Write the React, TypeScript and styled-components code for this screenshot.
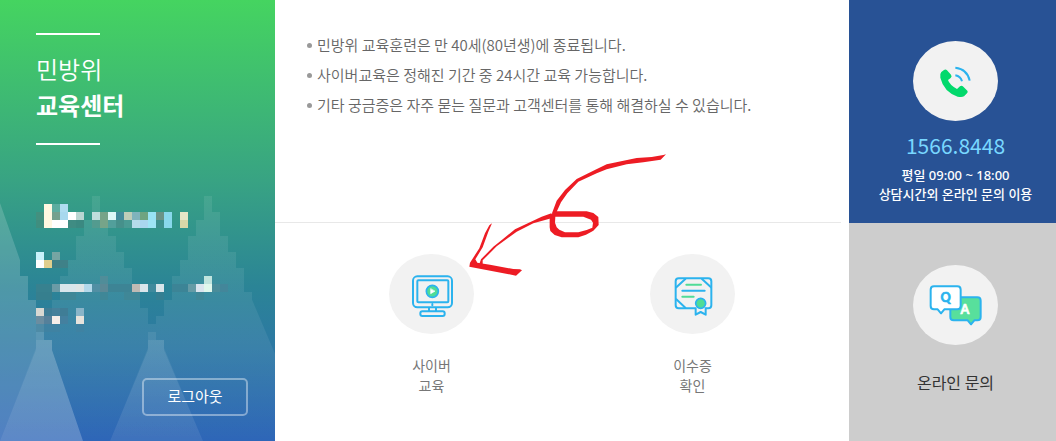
import React from "react";
import styled, { createGlobalStyle } from "styled-components";

const GlobalStyle = createGlobalStyle`
  *, *::before, *::after { box-sizing: border-box; }
  body { margin: 0; background: #fff; font-family: "Noto Sans CJK KR", "Noto Sans", sans-serif; }
  h1, ul, p { margin: 0; padding: 0; }
  ul { list-style: none; }
  a { color: inherit; text-decoration: none; }
`;

const Page = styled.div`
  display: grid;
  grid-template-columns: 275px minmax(0, 1fr) 207px;
  min-height: 100vh;
`;

const Sidebar = styled.aside`
  position: relative;
  overflow: hidden;
  display: flex;
  flex-direction: column;
  justify-content: space-between;
  padding: 33px 27px 25px 36px;
  color: #fff;
  background: linear-gradient(#45d460 0%, #38a383 41%, #2b8496 65%, #2e66b8 100%);
`;

const Backdrop = styled.svg`
  position: absolute;
  left: 0;
  top: 0;
  width: 275px;
  height: 441px;
`;

const Title = styled.h1`
  position: relative;
  align-self: flex-start;
  font-size: 24px;
  line-height: 36px;

  &::before, &::after {
    content: "";
    display: block;
    width: 64px;
    height: 2px;
    background: #fff;
  }
  &::before { margin-bottom: 16px; }
  &::after { margin-top: 20px; }
`;

const TitleLine = styled.span<{ $bold?: boolean }>`
  display: block;
  font-weight: ${(p) => (p.$bold ? 700 : 350)};
`;

const LogoutButton = styled.button`
  position: relative;
  align-self: flex-end;
  width: 106px;
  height: 38px;
  padding: 0 0 3px;
  border: 2px solid rgba(255, 255, 255, 0.4);
  border-radius: 5px;
  background: transparent;
  color: #fff;
  font: 400 15px/20px "Noto Sans CJK KR", sans-serif;
  cursor: pointer;
`;

const Main = styled.main`
  position: relative;
  display: flex;
  flex-direction: column;
`;

const Notices = styled.ul`
  height: 223px;
  margin-right: 8px;
  padding: 30px 0 0 32px;
  border-bottom: 1px solid #e8e8e8;
`;

const Notice = styled.li`
  display: flex;
  align-items: center;
  gap: 5px;
  font-size: 15px;
  line-height: 30px;
  font-weight: 350;
  color: #666;
  white-space: nowrap;

  &::before {
    content: "";
    width: 5px;
    height: 5px;
    border-radius: 50%;
    background: #999;
  }
`;

const QuickLinks = styled.nav`
  display: grid;
  grid-template-columns: repeat(2, 1fr);
  padding: 31px 26px 0;
`;

const QuickLink = styled.a`
  display: flex;
  flex-direction: column;
  align-items: center;
  gap: 21px;
  font-size: 14px;
  line-height: 20px;
  color: #777;
  text-align: center;
`;

const IconDisc = styled.svg`
  width: 85px;
  height: 80px;
  flex: none;
  border-radius: 50%;
  background: #f2f2f2;
  fill: none;
  stroke-linecap: round;
  stroke-linejoin: round;
`;

const Arrow = styled.svg`
  position: absolute;
  left: 175px;
  top: 140px;
  width: 230px;
  height: 145px;
  pointer-events: none;
`;

const Contact = styled.div`
  display: grid;
  grid-template-rows: 223px 1fr;
`;

const ContactCard = styled.a<{ $tone: "blue" | "gray" }>`
  display: flex;
  flex-direction: column;
  align-items: center;
  padding: ${(p) => (p.$tone === "blue" ? 41 : 42)}px 0 0 6px;
  background: ${(p) => (p.$tone === "blue" ? "#285295" : "#cdcdcd")};
  color: ${(p) => (p.$tone === "blue" ? "#fff" : "#333")};
  text-align: center;
`;

const PhoneNumber = styled.strong`
  margin-top: 9px;
  font-size: 21px;
  line-height: 30px;
  font-weight: 400;
  color: #78d7ff;
`;

const Hours = styled.p`
  margin-top: 6px;
  font-family: "Noto Sans", "Noto Sans CJK KR", sans-serif;
  font-size: 13px;
  line-height: 19px;
  font-weight: 500;
  white-space: nowrap;
`;

const ContactLabel = styled.span`
  margin-top: 25px;
  font-size: 16px;
  line-height: 24px;
`;

const CELL = 8;
const GRID_X = 36;
const SKY = "#2bb3ee";
const MINT = "#4fdc97";

/* Edges inside the mosaic band follow its 8px grid and are straight outside it. */
function beam(apexX: number, apexY: number, leftX: number, rightX: number) {
  const at = (target: number, y: number) => apexX + ((target - apexX) * (y - apexY)) / (441 - apexY);
  const edge = (target: number, y: number, minimum: number) => {
    const x = at(target, y + 4);
    if (x < 20 || x > 252) return [`${at(target, y)},${y}`, `${at(target, y + CELL)},${y + CELL}`];
    const snapped = Math.max(4 + Math.round((x - 4) / CELL) * CELL, minimum);
    return [`${snapped},${y}`, `${snapped},${y + CELL}`];
  };
  const left: string[] = [];
  const right: string[] = [];
  for (let y = 196; y < 348; y += CELL) {
    left.push(...edge(leftX, y, 0));
    right.push(...edge(rightX, y, apexX + 4));
  }
  return [...left, `${leftX},441`, `${rightX},441`, ...right.reverse()].join(" ");
}

const MOSAIC: [number, Record<number, string>][] = [
  [204, { 1: "#fff8e1", 2: "#5cada0", 3: "#aedcf0" }],
  [212, { 0: "#43907f", 1: "#fff8e1", 2: "#74a08d", 3: "#a8d8ee", 4: "#fff", 5: "#b9d6d2", 7: "#bfdedc", 8: "#76a489", 9: "#def8f8", 10: "#438c9c", 11: "#becdb8", 12: "#80b3bc", 13: "#6fa481", 14: "#98e3f4", 15: "#6b9387", 16: "#88d8ec", 18: "#e4e6c7" }],
  [220, { 0: "#3f8e7f", 1: "#fff8e1", 2: "#fff", 3: "#fff", 4: "#3f8c83", 5: "#3b8981", 7: "#539b8f", 8: "#76a489", 9: "#529f9b", 10: "#46908b", 11: "#4a9b94", 12: "#b5dcea", 13: "#a9d6ee", 14: "#9ee4f5", 15: "#3d918f", 16: "#88d8ec", 18: "#d9d8a8" }],
  [252, { 0: "#c9f1fa", 2: "#76a5a3" }],
  [260, { 0: "#fff", 1: "#e0cf8d", 2: "#3e7f86", 3: "#3f8188" }],
  [276, { 8: "#508d99", 21: "#c0e4de" }],
  [284, { 0: "#37818f", 1: "#37818f", 2: "#6b9ba6", 3: "#dae6eb", 4: "#dae6eb", 5: "#dfe5e6", 6: "#b3d8ea", 7: "#518fa4", 8: "#5b8996", 9: "#3d8495", 10: "#3d8495", 11: "#3d8495", 12: "#c0bab4", 13: "#d9e5eb", 14: "#3f8a9d", 15: "#d9e5ea", 17: "#3c8496", 18: "#3c8496", 19: "#659ba6", 20: "#dae4ee", 21: "#e0f7ec", 22: "#4a8c9a", 23: "#43869a" }],
  [292, { 0: "#367f8e", 1: "#367f8e", 3: "#3f8797", 4: "#3f8797", 8: "#3f8797", 11: "#3f8797", 12: "#3f8797", 15: "#347f92", 20: "#3f8797" }],
  [308, { 0: "#d8d8d2", 1: "#3f7d96", 2: "#46809a", 3: "#3f7d96", 5: "#89b4c8" }],
  [316, { 0: "#6b8da0", 1: "#55809a", 2: "#f6ede8", 3: "#44809f", 5: "#e8e3dc" }],
  [324, { 0: "#4e8ba6", 1: "#3f82a2", 2: "#3f82a2", 5: "#3f82a2" }],
];

const NOTICES = [
  "민방위 교육훈련은 만 40세(80년생)에 종료됩니다.",
  "사이버교육은 정해진 기간 중 24시간 교육 가능합니다.",
  "기타 궁금증은 자주 묻는 질문과 고객센터를 통해 해결하실 수 있습니다.",
];

const MonitorIcon = () => (
  <IconDisc viewBox="27 42 255 240" preserveAspectRatio="none" aria-hidden="true" stroke={SKY} strokeWidth="6">
    <rect x="99" y="109" width="117" height="93" rx="13" />
    <rect x="112" y="121" width="93" height="66" rx="3" />
    <path d="M157 192v4M147 204v9M168 204v9" />
    <rect x="121" y="214" width="73" height="14" rx="6" />
    <circle cx="157" cy="154" r="18" fill={MINT} strokeWidth="5" />
    <path d="M152 147v14l12-7z" fill="#fff" stroke="#fff" strokeWidth="2" />
  </IconDisc>
);

const CertificateIcon = () => (
  <IconDisc viewBox="30 42 255 240" preserveAspectRatio="none" aria-hidden="true" stroke={SKY} strokeWidth="6">
    <path d="M164 205H116Q107 205 107 196V124Q107 115 116 115H205Q214 115 214 124V196Q214 205 205 205H199" />
    <path d="M109 142L136 117M186 117L213 142M109 178L136 203M127 152H194" />
    <path d="M139 134H183M127 170H161" stroke={MINT} />
    <path d="M167 205v19l15-8 15 8v-19" />
    <circle cx="182" cy="190" r="15" fill={MINT} strokeWidth="5" />
  </IconDisc>
);

const PhoneIcon = () => (
  <IconDisc viewBox="220 63 255 240" preserveAspectRatio="none" aria-hidden="true">
    <path
      fill="#03d96c"
      d="M313 150Q318 147 322 151L334 164Q338 169 333 174L325 180Q330 195 352 207L361 199Q366 195 371 200L383 212Q386 216 382 220L373 229Q367 233 354 230Q312 215 302 173Q300 161 305 156Z"
    />
    <path d="M347 143Q383 147 390 182M347 166Q363 169 367 184" stroke={SKY} strokeWidth="6" strokeLinecap="butt" />
  </IconDisc>
);

const QnaIcon = () => (
  <IconDisc viewBox="220 166 255 240" preserveAspectRatio="none" aria-hidden="true" stroke={SKY} strokeWidth="6">
    <path fill="#58df9c" d="M342 263H413Q423 263 423 273V322Q423 332 413 332H404L394 344L384 332H342Q332 332 332 322V273Q332 263 342 263Z" />
    <path fill="#fff" d="M283 230H353Q363 230 363 240V289Q363 299 353 299H314L304 311L294 299H283Q273 299 273 289V240Q273 230 283 230Z" />
    <g fontFamily="Lato, sans-serif" fontWeight="700" textAnchor="middle" strokeWidth="2">
      <text x="318" y="278" fontSize="38" fill={SKY} stroke={SKY}>Q</text>
      <text x="376" y="312" fontSize="38" fill="#fff" stroke="#fff">A</text>
    </g>
  </IconDisc>
);

export default function App() {
  return (
    <>
      <GlobalStyle />
      <Page>
        <Sidebar>
          <Backdrop viewBox="0 0 275 441" aria-hidden="true">
            <defs>
              <linearGradient id="fade" gradientUnits="userSpaceOnUse" x1="0" y1="196" x2="0" y2="441">
                <stop offset="0" stopColor="#fff" stopOpacity="0.08" />
                <stop offset="0.6" stopColor="#fff" stopOpacity="0.07" />
                <stop offset="1" stopColor="#fff" stopOpacity="0" />
              </linearGradient>
            </defs>
            <polygon points="0,203 20,260 20,276 28,276 28,300 36,300 36,324 44,324 44,340 52,340 52,350 83,441 0,441" fill="#fff" opacity="0.17" />
            <polygon points={beam(96, 196, 0, 203)} fill="url(#fade)" />
            <polygon points={beam(208, 196, 110, 312)} fill="url(#fade)" />
            <polygon points="36,332 44,332 44,340 52,340 52,350 83,441 0,441 36,350" fill="#fff" opacity="0.07" />
            <polygon points="148,332 156,332 156,340 164,340 164,350 203,441 110,441 148,350" fill="#fff" opacity="0.08" />
            <g shapeRendering="crispEdges">
              {MOSAIC.map(([y, cells]) =>
                Object.entries(cells).map(([col, fill]) => (
                  <rect key={`${y}-${col}`} x={GRID_X + Number(col) * CELL} y={y} width={CELL} height={CELL} fill={fill} />
                )),
              )}
            </g>
          </Backdrop>
          <Title>
            <TitleLine>민방위</TitleLine>
            <TitleLine $bold>교육센터</TitleLine>
          </Title>
          <LogoutButton type="button">로그아웃</LogoutButton>
        </Sidebar>

        <Main>
          <Notices>
            {NOTICES.map((text) => (
              <Notice key={text}>{text}</Notice>
            ))}
          </Notices>
          <QuickLinks>
            <QuickLink href="#cyber">
              <MonitorIcon />
              <span>사이버<br />교육</span>
            </QuickLink>
            <QuickLink href="#certificate">
              <CertificateIcon />
              <span>이수증<br />확인</span>
            </QuickLink>
          </QuickLinks>
          <Arrow viewBox="0 0 690 435" fill="#ed1c24" aria-hidden="true">
            <path d="M648 43L632 59L580 67L530 73L470 88L440 100L385 125L352 160L333 187L317 222L306 220L320 182L345 150L380 117L430 92L470 73L560 54L605 51L640 45Z" />
            <path fillRule="evenodd" d="M299 226L315 214H410L430 219L445 231L446 255L430 272L408 284L385 292H335L314 285L301 273L299 262ZM316 230L315 248L320 262L328 269L345 277H385L410 270L427 263L429 248L423 239L400 230Z" />
            <path d="M304 220L275 230L235 249L195 268L160 296L130 320L93 358L88 372H98V361L140 319L200 275L250 250L304 235Z" />
            <path d="M126 250L118 256L105 280L88 325L60 368L58 380L198 407L216 391L210 388L190 387L120 374L82 368L76 358L98 322L115 275Z" />
          </Arrow>
        </Main>

        <Contact>
          <ContactCard $tone="blue" href="tel:1566-8448">
            <PhoneIcon />
            <PhoneNumber>1566.8448</PhoneNumber>
            <Hours>평일 09:00 ~ 18:00<br />상담시간외 온라인 문의 이용</Hours>
          </ContactCard>
          <ContactCard $tone="gray" href="#inquiry">
            <QnaIcon />
            <ContactLabel>온라인 문의</ContactLabel>
          </ContactCard>
        </Contact>
      </Page>
    </>
  );
}
